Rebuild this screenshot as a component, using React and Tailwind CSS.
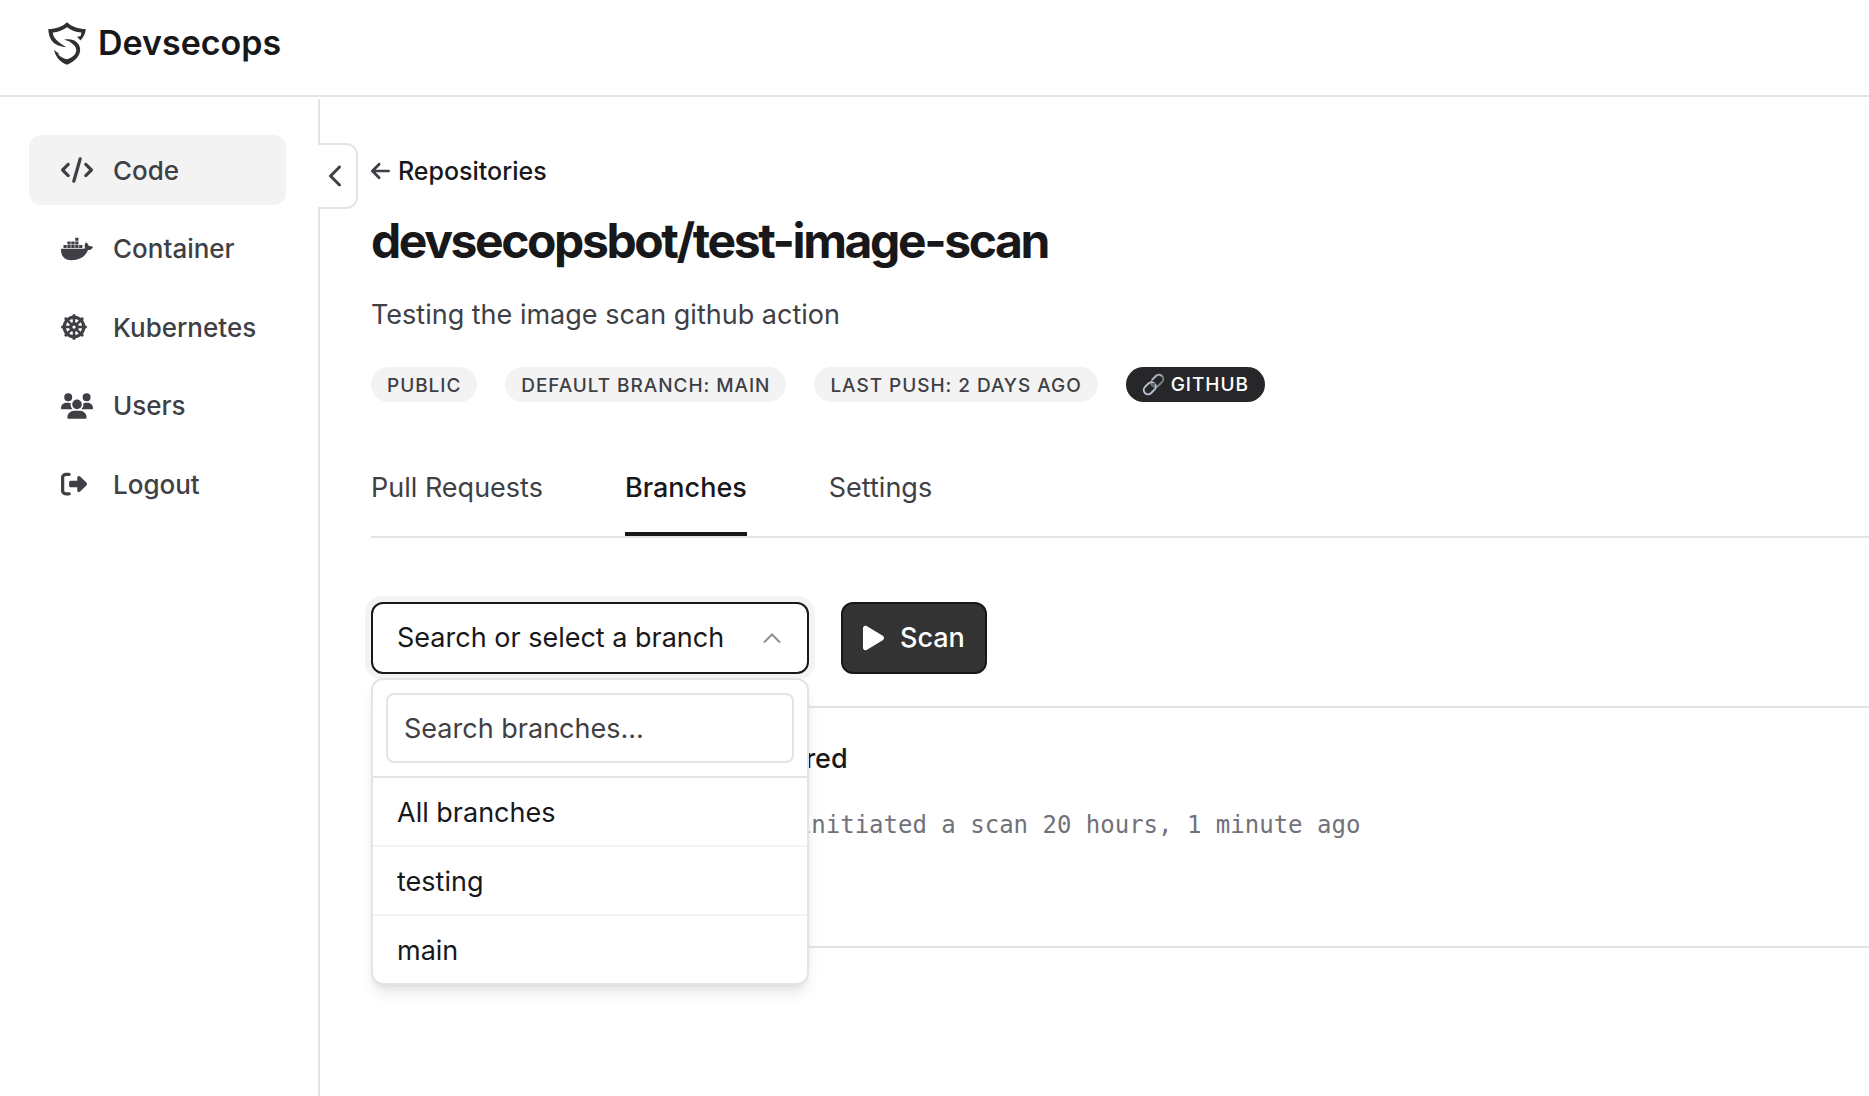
import { useState } from "react";
import {
  FaArrowLeft,
  FaChevronLeft,
  FaCode,
  FaDharmachakra,
  FaDocker,
  FaPlay,
  FaRightFromBracket,
  FaUsers,
} from "react-icons/fa6";

const navItems = [
  { label: "Code", icon: FaCode, iconWidth: "w-8" },
  { label: "Container", icon: FaDocker, iconWidth: "w-8" },
  { label: "Kubernetes", icon: FaDharmachakra, iconWidth: "w-[26px]" },
  { label: "Users", icon: FaUsers, iconWidth: "w-8" },
  { label: "Logout", icon: FaRightFromBracket, iconWidth: "w-[26px]" },
];

const badges = ["Public", "Default branch: main", "Last push: 2 days ago"];

const tabs = ["Pull Requests", "Branches", "Settings"];

const branches = ["All branches", "testing", "main"];

function Logo() {
  return (
    <svg viewBox="0 0 44 44" className="size-11" fill="#303030" aria-hidden="true">
      <path d="M22 1.200C17.500 5.600 11 8 3.300 8C3.600 15 6 20.500 10.500 23C13.200 24.800 16.500 25.500 21.300 26.200C17.800 23.800 14 21.800 11.500 19C9.200 16.700 8 14.500 7.800 11.500C13.400 11 18 9.300 22 6.200C26 9.300 31 11.200 36.300 11.500C36.200 12.900 36 14 35.400 15.300L32 15.800L35.500 19.500C39.200 15.500 40.500 12 40.700 8C33.500 8 26.500 5.600 22 1.200Z" />
      <path d="M19 18.800C24 17.600 29 18.600 32 21.500C35 24.500 35.700 28 34.800 31.500C33.200 37.200 28 41.300 22 43.800C15.500 41.300 10.600 36.500 9.200 29L14 32.700L13.200 33.200C15 35.600 18 37.300 22 38.300C26.500 37 30.200 34.300 31.100 30.500C31.700 27 30.200 24.700 27.700 22.900C25.200 20.800 23 19.600 19 18.800Z" />
    </svg>
  );
}

function LinkIcon() {
  return (
    <svg viewBox="0 0 24 24" className="size-[23px]" fill="none" aria-hidden="true">
      <g transform="rotate(-45 12 12)" strokeWidth="2">
        <rect x="10.500" y="7.500" width="14" height="9" rx="4.500" stroke="#7d828a" />
        <rect x="-0.500" y="7.500" width="14" height="9" rx="4.500" stroke="#b6c2d1" />
        <path d="M14.500 7.500h5.500a4.500 4.500 0 0 1 4.500 4.500" stroke="#a3adba" />
        <path d="M9 12h6" stroke="#59606b" />
      </g>
    </svg>
  );
}

function Header() {
  return (
    <header className="flex h-[97px] items-start border-b-2 border-[#e4e4e4] px-[45px] pt-5">
      <a href="#home" className="flex items-center gap-[9px]">
        <Logo />
        <span className="text-[34px] leading-[46px] font-semibold">Devsecops</span>
      </a>
    </header>
  );
}

function Sidebar({ activeItem, onSelect }) {
  return (
    <aside className="relative w-80 shrink-0 border-r-2 border-[#e4e4e4] px-[29px] pt-9">
      <nav className="mr-[3px] flex h-96 flex-col justify-between">
        {navItems.map(({ label, icon: Icon, iconWidth }) => (
          <a
            key={label}
            href={`#${label.toLowerCase()}`}
            onClick={() => onSelect(label)}
            className={`flex h-[70px] items-center rounded-xl pl-8 text-[26px] font-medium text-[#3f3f46] ${
              activeItem === label ? "bg-[#f3f3f3]" : ""
            }`}
          >
            <span className="w-[52px]">
              <Icon className={`h-[26px] ${iconWidth}`} />
            </span>
            {label}
          </a>
        ))}
      </nav>

      <button
        type="button"
        aria-label="Collapse sidebar"
        className="absolute top-11 left-full flex h-[66px] w-10 items-center rounded-r-xl border-2 border-l-0 border-[#e4e4e4] bg-white pl-[11px] text-[#3f3f46]"
      >
        <FaChevronLeft className="h-6 w-[15px]" />
      </button>
    </aside>
  );
}

function BranchSelect() {
  const [isOpen, setIsOpen] = useState(true);
  const [selected, setSelected] = useState("");
  const [search, setSearch] = useState("");

  const visibleBranches = branches.filter((branch) =>
    branch.toLowerCase().includes(search.toLowerCase()),
  );

  const handleSelect = (branch) => {
    setSelected(branch);
    setIsOpen(false);
  };

  return (
    <div className="relative w-[438px]">
      <button
        type="button"
        aria-haspopup="listbox"
        aria-expanded={isOpen}
        onClick={() => setIsOpen(!isOpen)}
        className="flex h-[72px] w-full items-center justify-between rounded-xl border-2 border-[#18181b] bg-white pr-[26px] pl-6 ring-6 ring-[#f3f3f3]"
      >
        {selected || "Search or select a branch"}
        <svg
          viewBox="0 0 18 10"
          className="h-[10px] w-[18px]"
          fill="none"
          stroke="#8e8e93"
          strokeWidth="2"
          aria-hidden="true"
        >
          <path d="M1 9.500L9 1.500L17 9.500" />
        </svg>
      </button>

      {isOpen && (
        <div className="absolute top-full left-0 z-10 mt-1 w-full overflow-hidden rounded-xl border-2 border-[#e4e4e4] bg-white shadow-lg">
          <div className="border-b-2 border-[#e4e4e4] p-[13px]">
            <input
              type="text"
              aria-label="Search branches"
              value={search}
              onChange={(e) => setSearch(e.target.value)}
              placeholder="Search branches..."
              className="h-[70px] w-full rounded-lg border-2 border-[#e4e4e4] px-4 outline-none placeholder:text-[#3f3f46]"
            />
          </div>
          <ul role="listbox" aria-label="Branches" className="divide-y-2 divide-[#f3f3f3]">
            {visibleBranches.map((branch) => (
              <li
                key={branch}
                role="option"
                aria-selected={selected === branch}
                onClick={() => handleSelect(branch)}
                className="flex h-[69px] cursor-pointer items-center px-6 pt-[3px] last:h-[67px]"
              >
                {branch}
              </li>
            ))}
          </ul>
        </div>
      )}
    </div>
  );
}

function ScanEvent() {
  return (
    <article className="h-[242px] rounded-l-xl border-2 border-r-0 border-[#e4e4e4] pt-[31px] pl-59">
      <h2 className="flex items-center gap-4 leading-10 font-medium">
        <FaCode className="h-[26px] w-8" />
        Scan triggered
      </h2>
      <p className="mt-7 font-['DejaVu_Sans_Mono',monospace] text-2xl leading-9 text-[#71717a]">
        devsecopsbot initiated a scan 20 hours, 1 minute ago
      </p>
    </article>
  );
}

function App() {
  const [activeItem, setActiveItem] = useState("Code");
  const [activeTab, setActiveTab] = useState("Branches");

  return (
    <div className="flex min-h-screen flex-col overflow-hidden bg-white font-['Inter',sans-serif] text-[27px] text-[#18181b]">
      <Header />

      <div className="mt-[2px] flex grow">
        <Sidebar activeItem={activeItem} onSelect={setActiveItem} />

        <main className="min-w-0 grow pt-[52px] pl-[51px]">
          <a href="#repositories" className="flex items-center gap-2 text-[25px] leading-10 font-medium">
            <FaArrowLeft className="h-[22px] w-[19px] text-[#3f3f46]" />
            Repositories
          </a>

          <h1 className="mt-5 text-5xl leading-[60px] font-bold tracking-tighter">
            devsecopsbot/test-image-scan
          </h1>
          <p className="mt-6 leading-10 text-[#3f3f46]">
            Testing the image scan github action
          </p>

          <div className="mt-8 flex gap-7 text-[19px] leading-[37px] font-medium tracking-wider uppercase">
            {badges.map((badge) => (
              <span key={badge} className="h-[35px] rounded-full bg-[#f3f3f3] px-4 text-[#3f3f46]">
                {badge}
              </span>
            ))}
            <a
              href="#github"
              className="flex h-[35px] items-center gap-1.5 rounded-full bg-[#27272a] px-4 text-white"
            >
              <LinkIcon />
              Github
            </a>
          </div>

          <nav className="mt-16 flex gap-[82px] border-b-2 border-[#e4e4e4]">
            {tabs.map((tab) => (
              <button
                key={tab}
                type="button"
                onClick={() => setActiveTab(tab)}
                className={`h-[70px] border-b-4 pb-[22px] leading-10 ${
                  activeTab === tab
                    ? "border-[#18181b] font-medium"
                    : "border-transparent text-[#3f3f46]"
                }`}
              >
                {tab}
              </button>
            ))}
          </nav>

          <div className="mt-16 flex gap-8">
            <BranchSelect />
            <button
              type="button"
              className="flex h-[72px] items-center gap-4 rounded-xl border-2 border-[#18181b] bg-[#333333] px-5 font-medium text-white"
            >
              <FaPlay className="h-7 w-[21px]" />
              Scan
            </button>
          </div>

          <section className="mt-8">
            <ScanEvent />
          </section>
        </main>
      </div>
    </div>
  );
}

export default App;
